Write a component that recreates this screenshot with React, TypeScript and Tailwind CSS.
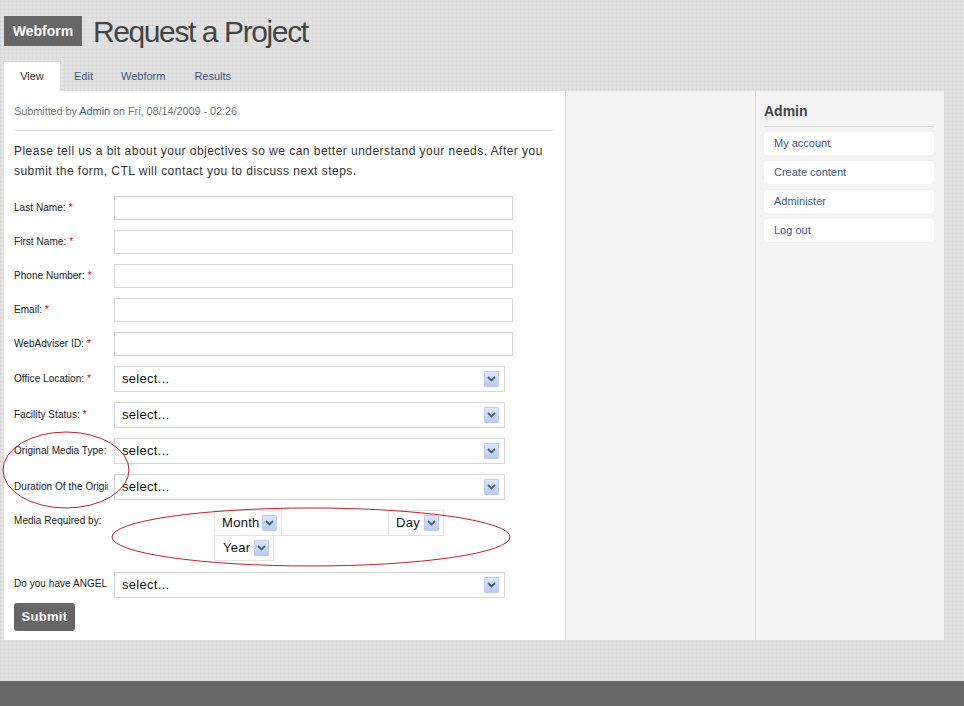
import React from "react";

const sans = { fontFamily: '"Liberation Sans", Arial, sans-serif' };

function Arrow({ className = "" }: { className?: string }) {
  return (
    <span
      className={`flex h-[16px] w-[15px] items-center justify-center rounded-[1px] border border-[#bccbef] bg-[linear-gradient(#dce6fb,#b7caf2)] ${className}`}
    >
      <svg width="9" height="6" viewBox="0 0 9 6">
        <path d="M1 1 L4.5 4.5 L8 1" fill="none" stroke="#4a5f88" strokeWidth="1.8" />
      </svg>
    </span>
  );
}

function Select() {
  return (
    <div className="flex h-[26px] w-[391px] items-center justify-between border border-[#d6d6d6] bg-white pl-[7px] pr-[5px]">
      <span className="text-[13px] tracking-[0.3px] text-[#111]">select...</span>
      <Arrow />
    </div>
  );
}

function Label({ text, req, lift }: { text: string; req?: boolean; lift?: boolean }) {
  return (
    <div
      className={`mr-[6px] w-[94px] shrink-0 overflow-hidden whitespace-nowrap text-[10px] tracking-[0.05px] text-[#222] ${
        lift ? "mb-[3px]" : "mb-[1px]"
      }`}
    >
      {text}
      {req && <span className="ml-[3px] text-[#c00]">*</span>}
    </div>
  );
}

function TextRow({ label }: { label: string }) {
  return (
    <div className="flex items-center">
      <Label text={label} req />
      <div className="h-[24px] w-[399px] border border-[#d6d6d6] bg-white" />
    </div>
  );
}

function SelectRow({ label, req, lift }: { label: string; req?: boolean; lift?: boolean }) {
  return (
    <div className="flex items-center">
      <Label text={label} req={req} lift={lift} />
      <Select />
    </div>
  );
}

export default function App() {
  return (
    <div
      className="flex min-h-[706px] w-full flex-col bg-[#e1e1e1] bg-[image:repeating-linear-gradient(90deg,rgba(0,0,0,0.025)_0_1px,transparent_1px_4px),repeating-linear-gradient(0deg,rgba(0,0,0,0.025)_0_1px,transparent_1px_4px)]"
      style={sans}
    >
      {/* Page title */}
      <div className="flex h-[62px] items-start pl-[4px] pt-[16px]">
        <div className="flex h-[30px] w-[78px] items-center justify-center bg-[#666] text-[14px] font-bold text-white">
          Webform
        </div>
        <h1 className="ml-[11px] mt-[-1px] text-[30px] leading-[34px] tracking-[-1.4px] text-[#444]">
          Request a Project
        </h1>
      </div>

      {/* Tabs */}
      <div className="flex h-[29px] items-center px-[4px] text-[11px]">
        <div className="flex h-full w-[56px] items-center justify-center bg-white text-[#333]">View</div>
        <div className="ml-[14px] text-[#3b5a86]">Edit</div>
        <div className="ml-[28px] text-[#3b5a86]">Webform</div>
        <div className="ml-[29px] text-[#3b5a86]">Results</div>
      </div>

      {/* Content */}
      <div className="mx-[4px] flex h-[549px] w-[940px]">
        <main className="relative w-[561px] bg-white px-[10px] pt-[13px]">
          <div className="text-[11px] leading-[14px] tracking-[-0.1px] text-[#777]">
            Submitted by <span className="text-[#3b5a86]">Admin</span> on Fri, 08/14/2009 - 02:26
          </div>
          <div className="mr-[1px] mt-[12px] border-t border-[#e2e2e2]" />
          <p className="mt-[10px] text-[12px] leading-[20px] tracking-[0.47px] text-[#333]">
            Please tell us a bit about your objectives so we can better understand your needs. After you
            submit the form, CTL will contact you to discuss next steps.
          </p>

          <div className="mt-[15px] flex flex-col gap-[10px]">
            <TextRow label="Last Name:" />
            <TextRow label="First Name:" />
            <TextRow label="Phone Number:" />
            <TextRow label="Email:" />
            <TextRow label="WebAdviser ID:" />
            <SelectRow label="Office Location:" req />
            <SelectRow label="Facility Status:" req />
            <SelectRow label="Original Media Type:" />
            <SelectRow label="Duration Of the Original Media:" />

            <div className="flex items-start">
              <div className="pt-[3px]">
                <Label text="Media Required by:" />
              </div>
              <div className="flex flex-col pl-[100px]">
                <div className="flex w-[230px] border-b border-[#e2e2e2]">
                  <div className="flex h-[25px] w-[68px] items-center justify-between border-x border-t border-[#e2e2e2] pl-[7px] pr-[4px]">
                    <span className="text-[13px] tracking-[0.3px] text-[#111]">Month</span>
                    <Arrow />
                  </div>
                  <div className="ml-[106px] flex h-[25px] w-[56px] items-center justify-between border-x border-t border-[#e2e2e2] pl-[7px] pr-[4px]">
                    <span className="text-[13px] tracking-[0.3px] text-[#111]">Day</span>
                    <Arrow />
                  </div>
                </div>
                <div className="flex h-[25px] w-[60px] items-center justify-between border-x border-b border-[#e2e2e2] pl-[8px] pr-[4px]">
                  <span className="text-[13px] tracking-[0.3px] text-[#111]">Year</span>
                  <Arrow />
                </div>
              </div>
            </div>

            <div className="mt-[1px]">
              <SelectRow label="Do you have ANGEL course site?" lift />
            </div>
          </div>

          <button className="mt-[5px] flex h-[28px] w-[61px] items-center justify-center rounded-[3px] bg-[#666] text-[13px] font-bold tracking-[0.3px] text-white">
            Submit
          </button>

          {/* Hand-drawn highlight marks over the form */}
          <svg className="pointer-events-none absolute left-[-4px] top-[-91px]" width="561" height="640">
            <ellipse cx="66" cy="470" rx="63" ry="38" fill="none" stroke="#b8222c" strokeWidth="1" />
            <ellipse cx="311" cy="537" rx="199" ry="29" fill="none" stroke="#b8222c" strokeWidth="1" />
          </svg>
        </main>

        <div className="w-[190px] border-l border-[#dcdcdc] bg-[#f3f3f3]" />

        <aside className="w-[189px] border-l border-[#dcdcdc] bg-[#f3f3f3] pl-[8px] pr-[10px] pt-[12px]">
          <h2 className="text-[14px] font-bold leading-[16px] text-[#444]">Admin</h2>
          <div className="mt-[7px] border-t border-[#dcdcdc]" />
          <ul className="mt-[5px] flex flex-col gap-[6px] text-[11px] text-[#3b5a86]">
            <li className="flex h-[23px] items-center rounded-[4px] bg-white pl-[10px]">My account</li>
            <li className="flex h-[23px] items-center rounded-[4px] bg-white pl-[10px]">Create content</li>
            <li className="flex h-[23px] items-center rounded-[4px] bg-white pl-[10px]">Administer</li>
            <li className="flex h-[23px] items-center rounded-[4px] bg-white pl-[10px]">Log out</li>
          </ul>
        </aside>
      </div>

      <div className="h-[41px]" />
      <footer className="h-[25px] bg-[#666]" />
    </div>
  );
}
